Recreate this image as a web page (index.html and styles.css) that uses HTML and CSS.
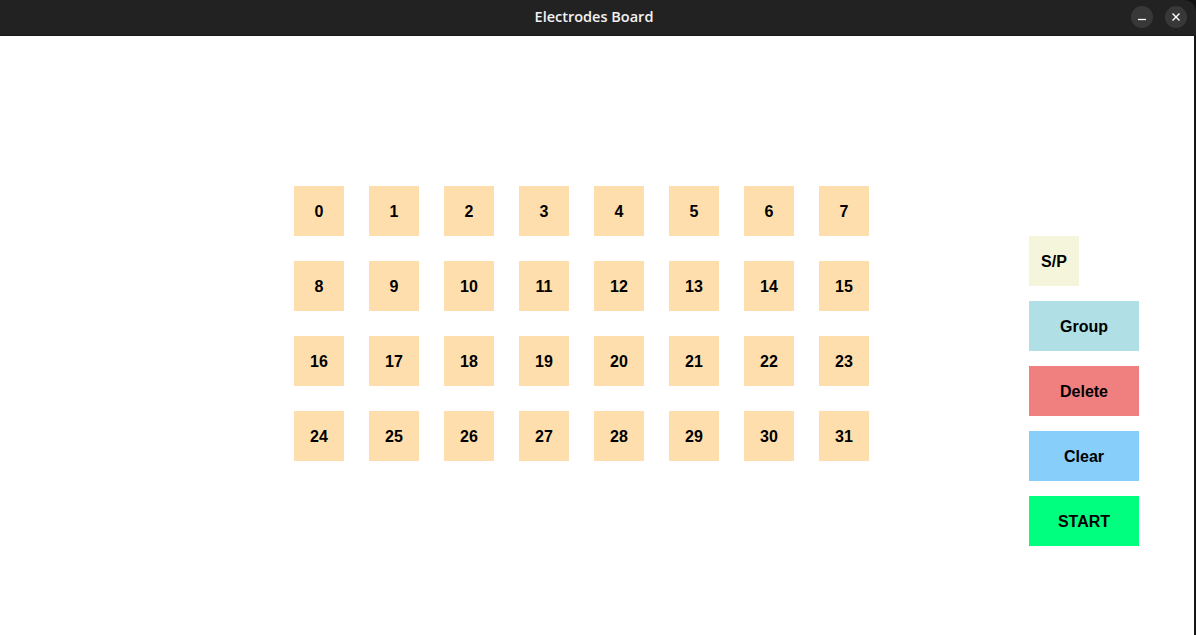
FILE: index.html
```html
<!DOCTYPE html>
<html lang="en">
<head>
<meta charset="utf-8">
<title>Electrodes Board</title>
<link rel="stylesheet" href="styles.css">
</head>
<body>
<div class="window">
  <header class="titlebar">
    <div class="title">Electrodes Board</div>
    <div class="controls">
      <span class="ctl">
        <svg width="10" height="10" viewBox="0 0 10 10"><path d="M1 7.5 H9" stroke="#fff" stroke-width="1.3"/></svg>
      </span>
      <span class="ctl">
        <svg width="10" height="10" viewBox="0 0 10 10"><path d="M1.5 1.5 L8.5 8.5 M8.5 1.5 L1.5 8.5" stroke="#fff" stroke-width="1.4"/></svg>
      </span>
    </div>
  </header>
  <main class="content">
    <div class="board">
      <div class="cell">0</div><div class="cell">1</div><div class="cell">2</div><div class="cell">3</div>
      <div class="cell">4</div><div class="cell">5</div><div class="cell">6</div><div class="cell">7</div>
      <div class="cell">8</div><div class="cell">9</div><div class="cell">10</div><div class="cell">11</div>
      <div class="cell">12</div><div class="cell">13</div><div class="cell">14</div><div class="cell">15</div>
      <div class="cell">16</div><div class="cell">17</div><div class="cell">18</div><div class="cell">19</div>
      <div class="cell">20</div><div class="cell">21</div><div class="cell">22</div><div class="cell">23</div>
      <div class="cell">24</div><div class="cell">25</div><div class="cell">26</div><div class="cell">27</div>
      <div class="cell">28</div><div class="cell">29</div><div class="cell">30</div><div class="cell">31</div>
    </div>
    <div class="sidebar">
      <div class="btn sp">S/P</div>
      <div class="btn group">Group</div>
      <div class="btn delete">Delete</div>
      <div class="btn clear">Clear</div>
      <div class="btn start">START</div>
    </div>
  </main>
</div>
</body>
</html>
```

FILE: styles.css
```css
html, body {
  margin: 0;
  padding: 0;
  background: #111;
  width: 1196px;
  height: 635px;
  overflow: hidden;
}

.window {
  display: flex;
  flex-direction: column;
  width: 1196px;
  height: 635px;
}

.titlebar {
  position: relative;
  height: 36px;
  background: #222222;
  border-bottom: 1px solid #181818;
  border-top-right-radius: 12px;
  display: flex;
  align-items: center;
  justify-content: center;
  padding-right: 8px;
  padding-bottom: 2px;
  box-sizing: border-box;
  flex-shrink: 0;
}

.title {
  color: #f2f2f2;
  font-family: "Open Sans", "Noto Sans", sans-serif;
  font-weight: 600;
  font-size: 14.5px;
  letter-spacing: 0;
}

.controls {
  position: absolute;
  right: 9px;
  top: 6px;
  display: flex;
  gap: 12px;
}

.ctl {
  width: 22px;
  height: 22px;
  border-radius: 50%;
  background: #383838;
  display: flex;
  align-items: center;
  justify-content: center;
}

.content {
  flex: 1;
  background: #ffffff;
  border-right: 2px solid #151515;
  display: flex;
  align-items: flex-start;
  padding: 150px 0 0 294px;
}

.board {
  display: grid;
  grid-template-columns: repeat(8, 50px);
  grid-auto-rows: 50px;
  gap: 25px;
}

.cell, .btn {
  display: flex;
  align-items: center;
  justify-content: center;
  padding-top: 2px;
  box-sizing: border-box;
  font-family: "Liberation Sans", Arial, sans-serif;
  font-weight: bold;
  font-size: 16px;
  color: #000;
}

.cell {
  background: #ffdead;
}

.sidebar {
  margin-left: 160px;
  margin-top: 50px;
  display: flex;
  flex-direction: column;
  align-items: flex-start;
  gap: 15px;
}

.btn {
  height: 50px;
  width: 110px;
}

.sp { width: 50px; background: #f5f5dc; }
.group { background: #b0e0e6; }
.delete { background: #f08080; }
.clear { background: #87cefa; }
.start { background: #00ff7f; }
```
